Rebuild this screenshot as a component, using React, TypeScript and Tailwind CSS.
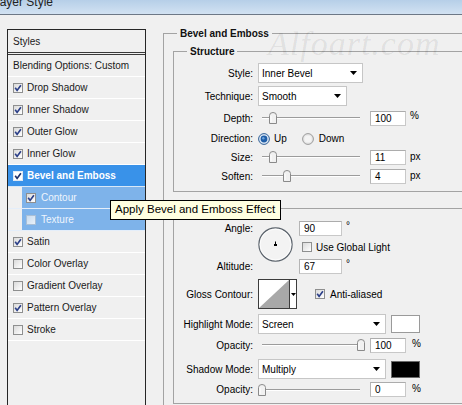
import React from "react";

function Check({ checked, dim = false }: { checked: boolean; dim?: boolean }) {
  return (
    <span
      className={
        dim
          ? "flex h-[10px] w-[10px] shrink-0 items-center justify-center border border-[#a9bfd6] bg-linear-to-br from-[#c9dcef] to-[#e9f1f9]"
          : "flex h-[10px] w-[10px] shrink-0 items-center justify-center border border-[#8e8f8f] bg-linear-to-br from-[#dadada] to-[#ffffff]"
      }
    >
      {checked && (
        <svg width="8" height="8" viewBox="0 0 8 8">
          <path d="M1.2 3.8 L3.1 6.4 L6.9 1.2" fill="none" stroke="#2b3f88" strokeWidth="1.7" />
        </svg>
      )}
    </span>
  );
}

function Arrow() {
  return (
    <svg width="7" height="4" viewBox="0 0 7 4">
      <path d="M0 0 H7 L3.5 4 Z" fill="#000" />
    </svg>
  );
}

function Select({ w, text }: { w: string; text: string }) {
  return (
    <div className={`${w} flex h-[20px] items-center justify-between border border-[#c6c6c6] bg-white pl-[3px] pr-[5px]`}>
      <span>{text}</span>
      <Arrow />
    </div>
  );
}

function NumBox({ w, text }: { w: string; text: string }) {
  return (
    <span className={`${w} flex h-[15px] shrink-0 items-center border border-[#c8c8c8] border-t-[#acacac] border-l-[#b5b5b5] bg-white pl-[4px]`}>
      {text}
    </span>
  );
}

function Slider({ pos }: { pos: number }) {
  return (
    <div className="relative h-[12px] w-[104px] shrink-0">
      <div className="absolute left-[4px] right-[2px] top-[5px] h-[2px] border-t border-[#9c9c9c] border-b border-b-white" />
      <svg className="absolute top-0" style={{ left: pos }} width="8" height="12" viewBox="0 0 8 12">
        <path d="M0.5 3.5 Q0.5 0.5 4 0.5 Q7.5 0.5 7.5 3.5 L7.5 11.5 L0.5 11.5 Z" fill="#f1f1f1" stroke="#8a8a8a" strokeWidth="1" />
        <path d="M2 4 V10" stroke="#ffffff" strokeWidth="1" />
      </svg>
    </div>
  );
}

function Radio({ on }: { on: boolean }) {
  return (
    <svg width="12" height="12" viewBox="0 0 12 12">
      {on ? (
        <>
          <circle cx="6" cy="6" r="5.4" fill="#dfe9f5" stroke="#2f5f96" strokeWidth="1" />
          <circle cx="6" cy="6" r="3.4" fill="#1f5ea8" />
          <circle cx="5.3" cy="5.2" r="1.2" fill="#6fa4dc" />
        </>
      ) : (
        <>
          <circle cx="6" cy="6" r="5.4" fill="#e6e6e6" stroke="#9a9a9a" strokeWidth="1" />
          <circle cx="6" cy="6" r="3.6" fill="#f4f4f4" />
        </>
      )}
    </svg>
  );
}

function FRow({ h, label, children }: { h: string; label: string; children?: React.ReactNode }) {
  return (
    <div className={`${h} flex items-center`}>
      <span className="w-[79px] shrink-0 text-right">{label}</span>
      <div className="ml-[5px] flex items-center">{children}</div>
    </div>
  );
}

function StyleRow({ name, checked }: { name: string; checked: boolean }) {
  return (
    <div className="flex h-[22px] items-center gap-[4px] border-b border-white pl-[5px] text-[#1a1a1a]">
      <Check checked={checked} />
      <span>{name}</span>
    </div>
  );
}

function SubRow({ name, checked }: { name: string; checked: boolean }) {
  return (
    <div className="flex h-[22px] border-b border-[#e4eefa] pl-[14px]">
      <div className="flex flex-1 items-center gap-[5px] bg-[#7eb3ea] pl-[4px] text-[#eef5fd]">
        <Check checked={checked} dim={!checked} />
        <span>{name}</span>
      </div>
    </div>
  );
}

function LeftPanel() {
  return (
    <div className="flex h-[390px] w-[139px] shrink-0 flex-col border-x border-t border-[#262626]">
      <div className="flex h-[22px] items-center pl-[5px] text-[#1a1a1a]">Styles</div>
      <div className="h-[3px] border-y border-[#3a3a3a]" />
      <div className="flex h-[22px] items-center border-b border-white pl-[5px] text-[#1a1a1a]">Blending Options: Custom</div>
      <StyleRow name="Drop Shadow" checked />
      <StyleRow name="Inner Shadow" checked />
      <StyleRow name="Outer Glow" checked />
      <StyleRow name="Inner Glow" checked />
      <div className="flex h-[22px] items-center gap-[4px] border-b border-[#d8e8f8] bg-[#3992e9] pl-[5px] font-bold text-white">
        <span className="flex h-[10px] w-[10px] shrink-0 items-center justify-center border border-[#dfe9f3] bg-white">
          <svg width="8" height="8" viewBox="0 0 8 8">
            <path d="M1.2 3.8 L3.1 6.4 L6.9 1.2" fill="none" stroke="#1d2f6a" strokeWidth="1.7" />
          </svg>
        </span>
        <span>Bevel and Emboss</span>
      </div>
      <SubRow name="Contour" checked />
      <SubRow name="Texture" checked={false} />
      <StyleRow name="Satin" checked />
      <StyleRow name="Color Overlay" checked={false} />
      <StyleRow name="Gradient Overlay" checked={false} />
      <StyleRow name="Pattern Overlay" checked />
      <StyleRow name="Stroke" checked={false} />
    </div>
  );
}

function Legend({ text, ml }: { text: string; ml: string }) {
  return <div className={`-mt-[7px] ${ml} w-fit bg-[#f0f0f0] px-[3px] font-bold leading-[13px] text-[#111]`}>{text}</div>;
}

function Dial() {
  return (
    <svg width="35" height="35" viewBox="0 0 35 35">
      <circle cx="17.5" cy="17.5" r="16.6" fill="#f3f3f3" stroke="#5b636c" strokeWidth="1.2" />
      <circle cx="17.5" cy="17.5" r="15.4" fill="none" stroke="#ffffff" strokeWidth="0.8" />
      <path d="M17.5 14.5 V18" stroke="#000" strokeWidth="1" />
      <rect x="16" y="17" width="3" height="2" fill="#000" />
    </svg>
  );
}

function Contour() {
  return (
    <div className="flex h-[30px] w-[39px] border border-[#3c3c3c]">
      <svg width="30" height="28" viewBox="0 0 30 28">
        <rect x="0" y="0" width="30" height="28" fill="#ffffff" />
        <polygon points="0,28 30,0 30,28" fill="#a8a8a8" />
      </svg>
      <div className="flex w-[7px] items-center justify-center border-l border-[#3c3c3c] bg-white">
        <svg width="5" height="3" viewBox="0 0 5 3">
          <path d="M0 0 H5 L2.5 3 Z" fill="#000" />
        </svg>
      </div>
    </div>
  );
}

function RightPanel() {
  return (
    <div className="ml-[17px] mt-[4px] w-[420px] shrink-0 border-l border-t border-[#a3a3a3] pl-[9px]">
      <Legend text="Bevel and Emboss" ml="ml-[4px]" />
      <div className="mt-[11px] border border-[#a3a3a3]">
        <Legend text="Structure" ml="ml-[13px]" />
        <div className="mt-[4px] flex flex-col pb-[4px]">
          <FRow h="h-[22px]" label="Style:">
            <Select w="w-[105px]" text="Inner Bevel" />
          </FRow>
          <FRow h="h-[24px]" label="Technique:">
            <Select w="w-[89px]" text="Smooth" />
          </FRow>
          <FRow h="h-[20px]" label="Depth:">
            <Slider pos={11} />
            <span className="ml-[8px]"><NumBox w="w-[36px]" text="100" /></span>
            <span className="-mt-[5px] ml-[4px]">%</span>
          </FRow>
          <FRow h="h-[21px]" label="Direction:">
            <Radio on />
            <span className="ml-[4px]">Up</span>
            <span className="ml-[15px] flex"><Radio on={false} /></span>
            <span className="ml-[5px]">Down</span>
          </FRow>
          <FRow h="h-[16px]" label="Size:">
            <Slider pos={11} />
            <span className="ml-[8px]"><NumBox w="w-[36px]" text="11" /></span>
            <span className="-mt-[2px] ml-[4px]">px</span>
          </FRow>
          <FRow h="h-[22px]" label="Soften:">
            <Slider pos={25} />
            <span className="ml-[8px]"><NumBox w="w-[36px]" text="4" /></span>
            <span className="-mt-[2px] ml-[4px]">px</span>
          </FRow>
        </div>
      </div>
      <div className="mt-[16px] border border-[#a3a3a3] pb-[5px]">
        <Legend text="Shading" ml="ml-[13px]" />
        <div className="mt-[4px] flex">
          <div className="flex w-[79px] shrink-0 flex-col items-end">
            <div className="flex h-[18px] items-center">Angle:</div>
            <div className="h-[20px]" />
            <div className="flex h-[18px] items-center">Altitude:</div>
          </div>
          <div className="ml-[5px] mt-[8px] flex">
            <Dial />
          </div>
          <div className="ml-[6px] flex flex-col">
            <div className="flex h-[18px] items-center">
              <NumBox w="w-[43px]" text="90" />
              <span className="-mt-[6px] ml-[4px]">°</span>
            </div>
            <div className="flex h-[20px] items-center gap-[4px] pl-[3px]">
              <Check checked={false} />
              <span>Use Global Light</span>
            </div>
            <div className="flex h-[18px] items-center">
              <NumBox w="w-[43px]" text="67" />
              <span className="-mt-[6px] ml-[4px]">°</span>
            </div>
          </div>
        </div>
        <div className="mt-[4px] flex h-[30px] items-center">
          <span className="w-[79px] shrink-0 text-right">Gloss Contour:</span>
          <div className="ml-[5px] flex">
            <Contour />
          </div>
          <div className="ml-[18px] flex items-center gap-[5px]">
            <Check checked />
            <span>Anti-aliased</span>
          </div>
        </div>
        <div className="mt-[3px]">
          <FRow h="h-[24px]" label="Highlight Mode:">
            <Select w="w-[128px]" text="Screen" />
            <span className="ml-[5px] h-[18px] w-[29px] border border-[#9a9a9a] bg-white" />
          </FRow>
        </div>
        <FRow h="h-[18px]" label="Opacity:">
          <Slider pos={99} />
          <span className="ml-[8px]"><NumBox w="w-[36px]" text="100" /></span>
          <span className="-mt-[3px] ml-[6px]">%</span>
        </FRow>
        <div className="mt-[3px]">
          <FRow h="h-[24px]" label="Shadow Mode:">
            <Select w="w-[128px]" text="Multiply" />
            <span className="ml-[5px] h-[17px] w-[29px] border border-[#6a6a6a] bg-black" />
          </FRow>
        </div>
        <FRow h="h-[17px]" label="Opacity:">
          <Slider pos={0} />
          <span className="ml-[8px]"><NumBox w="w-[36px]" text="0" /></span>
          <span className="-mt-[3px] ml-[6px]">%</span>
        </FRow>
      </div>
    </div>
  );
}

export default function App() {
  return (
    <div className="relative h-[405px] w-[462px] overflow-hidden bg-[#f0f0f0] font-['Liberation_Sans',Arial,sans-serif] text-[10px] text-black">
      <div className="h-[15px] overflow-hidden border-b border-[#6d7886] bg-linear-to-b from-[#b6cfe8] to-[#d2e2f2]">
        <div className="-ml-[7px] -mt-[4px] text-[12px] leading-[12px] text-[#222]">Layer Style</div>
      </div>
      <div className="flex pl-[7px] pt-[14px]">
        <LeftPanel />
        <RightPanel />
      </div>
      <div className="pointer-events-none absolute left-[268px] top-[27px] font-['Liberation_Serif',serif] text-[34px] italic leading-[34px] tracking-[1px] text-[rgba(0,0,0,0.08)]">
        Alfoart.com
      </div>
      <div className="absolute left-[110px] top-[200px] flex h-[20px] items-center border border-black bg-[#ffffe1] pl-[4px] pr-[5px] text-[11.5px] text-black">
        Apply Bevel and Emboss Effect
      </div>
    </div>
  );
}
